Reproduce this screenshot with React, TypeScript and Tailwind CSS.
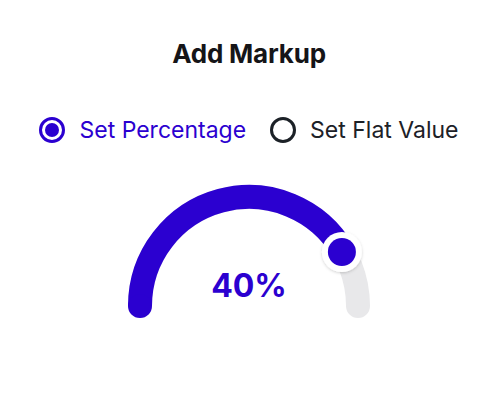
import React from "react";

const BLUE = "#2b00d0";

function Gauge() {
  const cx = 130;
  const cy = 131;
  const r = 109;
  const a = (30 * Math.PI) / 180;
  const kx = cx + r * Math.cos(a);
  const ky = cy - r * Math.sin(a);
  return (
    <div className="relative w-[260px] h-[150px]">
      <svg width="260" height="150" viewBox="0 0 260 150">
        <defs>
          <filter id="ks" x="-50%" y="-50%" width="200%" height="200%">
            <feDropShadow dx="0" dy="1" stdDeviation="1.6" floodColor="#000" floodOpacity="0.18" />
          </filter>
        </defs>
        <path
          d={`M ${cx - r} ${cy} A ${r} ${r} 0 0 1 ${cx + r} ${cy}`}
          fill="none"
          stroke="#e8e8ea"
          strokeWidth="24"
          strokeLinecap="round"
        />
        <path
          d={`M ${cx - r} ${cy} A ${r} ${r} 0 0 1 ${kx} ${ky}`}
          fill="none"
          stroke={BLUE}
          strokeWidth="24"
          strokeLinecap="butt"
        />
        <path d={`M ${cx - r} ${cy} L ${cx - r} ${cy}`} stroke={BLUE} strokeWidth="24" strokeLinecap="round" />
        <circle cx={kx - 1.5} cy={ky + 0.5} r="20" fill="#fff" filter="url(#ks)" />
        <circle cx={kx - 1.5} cy={ky + 0.5} r="14" fill={BLUE} />
      </svg>
      <div
        className="absolute left-0 right-0 top-[91px] text-center text-[32px] leading-[40px] font-bold text-[#2b00d0]"
        style={{ fontFamily: "Inter, 'Noto Sans', sans-serif" }}
      >
        40%
      </div>
    </div>
  );
}

export default function App() {
  return (
    <div
      className="w-[498px] h-[415px] bg-white flex flex-col items-center"
      style={{ fontFamily: "Inter, 'Noto Sans', sans-serif" }}
    >
      <h1 className="mt-[38px] text-[26px] leading-[32px] font-bold text-[#151518] tracking-[-0.2px]">
        Add Markup
      </h1>
      <div className="mt-[47px] flex items-center gap-6 h-[26px]">
        <div className="flex items-center gap-[14px]">
          <div className="w-[26px] h-[26px] rounded-full border-[3px] border-[#2b00d0] flex items-center justify-center">
            <div className="w-[14px] h-[14px] rounded-full bg-[#2b00d0]" />
          </div>
          <span className="text-[23px] leading-[26px] text-[#2b00d0]">Set Percentage</span>
        </div>
        <div className="flex items-center gap-[14px]">
          <div className="w-[26px] h-[26px] rounded-full border-[3px] border-[#1c2127]" />
          <span className="text-[23px] leading-[26px] text-[#1c2127]">Set Flat Value</span>
        </div>
      </div>
      <div className="mt-[32px]">
        <Gauge />
      </div>
    </div>
  );
}
